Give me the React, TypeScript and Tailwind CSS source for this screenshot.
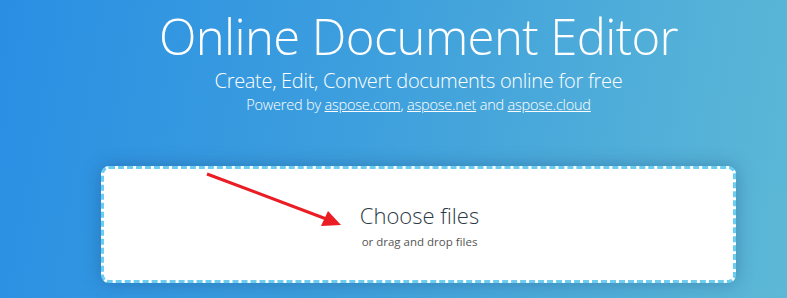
export default function App() {
  return (
    <div
      className="h-[298px] w-full overflow-hidden bg-[linear-gradient(100deg,#2a8fe4_0%,#3d9fdd_45%,#5db8d6_100%)] pl-[50px] text-white"
      style={{ fontFamily: '"Open Sans", "Noto Sans", sans-serif' }}
    >
      <div className="flex flex-col items-center">
        <h1 className="mt-[6px] text-[49px] font-light leading-[60px] tracking-[-0.6px]">
          Online Document Editor
        </h1>
        <p className="mt-[2px] text-[20px] font-light leading-[26px] tracking-[-0.3px]">
          Create, Edit, Convert documents online for free
        </p>
        <p className="mt-[1px] text-[14.5px] font-light leading-[20px] tracking-[-0.2px]">
          Powered by <a className="underline">aspose.com</a>,{" "}
          <a className="underline">aspose.net</a> and{" "}
          <a className="underline">aspose.cloud</a>
        </p>

        <div className="relative mt-[51px] flex h-[117px] w-[635px] flex-col items-center justify-center rounded-[8px] border-[3px] border-dashed border-[#6ccdf0] bg-white shadow-[0_0_18px_rgba(20,60,110,0.35)]">
          <p className="mt-[2px] pl-[2px] text-[22px] font-light leading-[28px] text-[#2d3a45]">
            Choose files
          </p>
          <p className="mt-[5px] pl-[2px] text-[11.5px] leading-[16px] text-[#555]">
            or drag and drop files
          </p>
          <svg
            className="absolute left-0 top-0"
            width="635"
            height="117"
            viewBox="101 167 635 117"
            fill="none"
          >
            <line x1="204" y1="172" x2="326" y2="218" stroke="#ea1c24" strokeWidth="3" />
            <polygon points="338,223 318,224 325,209" fill="#ea1c24" />
          </svg>
        </div>
      </div>
    </div>
  );
}
